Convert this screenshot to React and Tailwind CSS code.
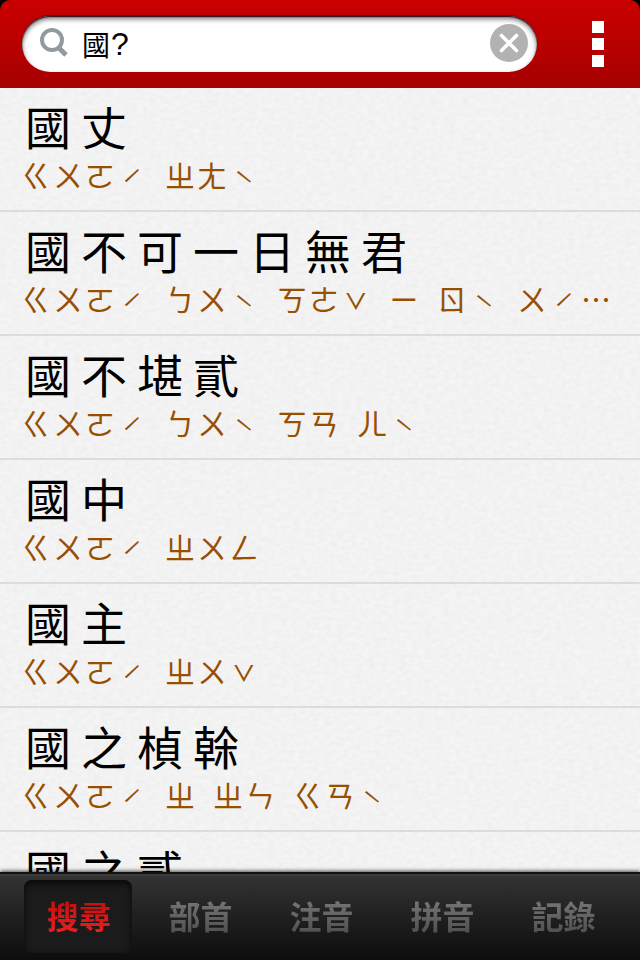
import React from "react";

const entries = [
  { title: "國丈", reading: "ㄍㄨㄛˊ ㄓㄤˋ" },
  { title: "國不可一日無君", reading: "ㄍㄨㄛˊ ㄅㄨˋ ㄎㄜˇ ㄧ ㄖˋ ㄨˊ…" },
  { title: "國不堪貳", reading: "ㄍㄨㄛˊ ㄅㄨˋ ㄎㄢ ㄦˋ" },
  { title: "國中", reading: "ㄍㄨㄛˊ ㄓㄨㄥ" },
  { title: "國主", reading: "ㄍㄨㄛˊ ㄓㄨˇ" },
  { title: "國之楨榦", reading: "ㄍㄨㄛˊ ㄓ ㄓㄣ ㄍㄢˋ" },
  { title: "國之貳", reading: "ㄍㄨㄛˊ ㄓ ㄦˋ" },
];

const tabs = ["搜尋", "部首", "注音", "拼音", "記錄"];

function Header() {
  return (
    <div className="bg-black">
      <header className="flex h-[88px] items-center rounded-t-[10px] bg-gradient-to-b from-[#ca0000] to-[#a60000] pl-[22px] pr-9">
        <div className="flex h-14 w-[515px] items-center rounded-full bg-white pl-[17px] pr-[9px] shadow-[inset_0_3px_5px_rgba(0,0,0,0.55),inset_0_1px_1px_#5d1020,0_-1px_1px_#75001a]">
          <svg className="size-8 shrink-0" viewBox="0 0 32 32" fill="none" stroke="#929aa0">
            <circle cx="13" cy="12" r="10" strokeWidth="4" />
            <path d="M19.5 19.5 27 27" strokeWidth="5" />
          </svg>
          <div className="flex grow items-center whitespace-nowrap pl-[11px] text-black">
            <span className="font-['Noto_Sans_CJK_TC',sans-serif] text-[28px] font-normal leading-[50px]">國</span>
            <span className="pl-px font-['Liberation_Sans',sans-serif] text-[32px] leading-[50px]">?</span>
          </div>
          <svg className="mb-[2px] size-[38px] shrink-0" viewBox="0 0 38 38">
            <circle cx="19" cy="19" r="19" fill="#b2b2b2" />
            <path d="M11.5 11.5 26.5 26.5M26.5 11.5 11.5 26.5" stroke="#fff" strokeWidth="3.6" strokeLinecap="round" />
          </svg>
        </div>
        <div className="ml-auto flex flex-col gap-[5px]">
          <i className="size-3 bg-white" />
          <i className="size-3 bg-white" />
          <i className="size-3 bg-white" />
        </div>
      </header>
    </div>
  );
}

function PaperTexture() {
  return (
    <svg className="absolute inset-0 size-full" aria-hidden="true">
      <filter id="paper" x="0" y="0" width="100%" height="100%" colorInterpolationFilters="sRGB">
        <feTurbulence type="fractalNoise" baseFrequency="0.16 0.24" numOctaves="2" seed="4" />
        <feColorMatrix values="0.045 0 0 0 0.927  0.045 0 0 0 0.927  0.045 0 0 0 0.927  0 0 0 0 1" />
      </filter>
      <rect width="100%" height="100%" filter="url(#paper)" />
    </svg>
  );
}

function readingClass(c) {
  if (c === " ") return "w-4";
  if (c === "ˊ") return "w-8 translate-y-[13px] scale-[1.35] text-center font-light";
  if (c === "ˇ") return "w-8 translate-y-[13px] scale-x-[1.35] scale-y-[1.5] text-center font-light";
  if (c === "ˋ") return "w-8 translate-y-[11px] scale-[1.25] text-center font-light";
  return "w-8 text-center";
}

function Reading({ text }) {
  return (
    <div className="flex h-10 text-[30px] leading-9 text-[#984f00]">
      {[...text].map((c, i) => (
        <span key={i} className={readingClass(c)}>
          {c}
        </span>
      ))}
    </div>
  );
}

function Entry({ title, reading }) {
  return (
    <li className="h-[124px] shrink-0 border-b-2 border-[#dcdcdc] px-5 pt-2.5">
      <div className="flex h-[58px] text-[46px] leading-[54px] text-black">
        {[...title].map((c, i) => (
          <span key={i} className="w-14 text-center">
            {c}
          </span>
        ))}
      </div>
      <Reading text={reading} />
    </li>
  );
}

function TabBar() {
  return (
    <nav className="relative flex h-[88px] gap-[13px] border-t-2 border-[#121212] bg-gradient-to-b from-[#343434] to-[#0d0d0d] pl-6 pt-1.5 shadow-[0_-1px_4px_rgba(0,0,0,0.7),inset_0_2px_0_#3c3c3c]">
      {tabs.map((t, i) => (
        <div
          key={t}
          className={
            i === 0
              ? "flex h-[73px] w-[108px] items-center justify-center rounded-lg bg-[#1b1b1b] pb-1 pl-0.5 shadow-[inset_0_3px_6px_#080808]"
              : "flex h-[73px] w-[108px] items-center justify-center pb-1 pl-[3px]"
          }
        >
          <span
            className={
              i === 0
                ? "bg-gradient-to-b from-[#b80d0d] to-[#ef2020] bg-clip-text text-[32px] font-bold leading-10 text-transparent"
                : "bg-gradient-to-b from-[#7c7c7c] to-[#4e4e4e] bg-clip-text text-[32px] font-bold leading-10 text-transparent"
            }
          >
            {t}
          </span>
        </div>
      ))}
    </nav>
  );
}

export default function App() {
  return (
    <div className="flex h-[960px] w-[640px] flex-col overflow-hidden bg-black font-['Noto_Sans_CJK_TC',sans-serif]" lang="zh-TW">
      <Header />
      <main className="relative h-[784px] overflow-hidden bg-[#f2f2f2]">
        <PaperTexture />
        <ul className="relative flex flex-col">
          {entries.map((e) => (
            <Entry key={e.title} {...e} />
          ))}
        </ul>
      </main>
      <TabBar />
    </div>
  );
}
